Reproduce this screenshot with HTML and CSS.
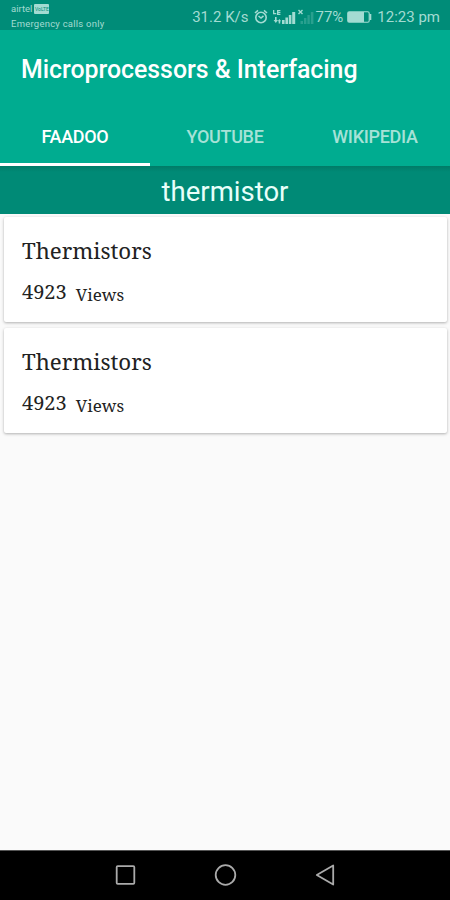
FILE: index.html
```html
<!DOCTYPE html>
<html lang="en">
<head>
  <meta charset="UTF-8" />
  <meta name="viewport" content="width=device-width, initial-scale=1.0"/>
  <title>Microprocessors &amp; Interfacing</title>
  <link rel="stylesheet" href="styles.css">
</head>
<body>

  <div class="status">
    <div class="carrier">
      <div class="network">airtel <span class="volte">VoLTE</span></div>
      <div class="emergency">Emergency calls only</div>
    </div>
    <div class="indicators">
      <span>31.2 K/s</span>
      <svg class="alarm" width="14" height="16" viewBox="0 0 14 16" fill="none" stroke="currentColor" stroke-width="1.6">
        <circle cx="7" cy="8.5" r="5.2"/>
        <path d="M1 4l3-2.6M13 4l-3-2.6M4.5 7l2.5 2 2.5-2.2"/>
      </svg>
      <svg class="signal" width="43" height="18" viewBox="0 0 43 18" fill="currentColor">
        <path d="M1 2h1.3v3h2v1.2H1zM5 2h3.4v1.2H6.4v.7h2v1.2h-2v.7h2V7H5zM3 9h1.6v3H6l-2.2 3-2.2-3H3zM6.7 15.5v-2.3h-1L7.4 11l1.8 2.2h-1v2.3z"/>
        <path d="M10 12h2.6v4H10zM13.4 9.5H16V16h-2.6zM16.8 7h2.6v9h-2.6zM20.2 4h3v12h-3z"/>
        <path d="M26.5 2l4 4m0-4l-4 4" fill="none" stroke="currentColor" stroke-width="1.4"/>
        <path opacity=".25" d="M28.5 13H31v3h-2.5zM32 10h2.4v6H32zM35.4 7h2.4v9h-2.4zM38.8 4h2.6v12h-2.6z"/>
      </svg>
      <span>77%</span>
      <svg class="battery" width="25" height="12" viewBox="0 0 25 12">
        <rect x=".7" y=".7" width="21.5" height="10.6" rx="1.5" fill="none" stroke="currentColor" stroke-width="1.1"/>
        <path d="M1 1h16v10H1zM22.5 3h1.8v6h-1.8z" fill="currentColor"/>
      </svg>
      <span>12:23 pm</span>
    </div>
  </div>

  <header>
    <h1>Microprocessors &amp; Interfacing</h1>
    <nav class="tabs">
      <a class="tab active">FAADOO</a>
      <a class="tab">YOUTUBE</a>
      <a class="tab">WIKIPEDIA</a>
    </nav>
  </header>

  <div class="topic">thermistor</div>

  <main>
    <div class="card">
      <h2>Thermistors</h2>
      <p><span class="count">4923</span><span class="views">Views</span></p>
    </div>
    <div class="card">
      <h2>Thermistors</h2>
      <p><span class="count">4923</span><span class="views">Views</span></p>
    </div>
  </main>

  <footer>
    <svg width="24" height="24" viewBox="0 0 24 24"><rect x="3.7" y="3.2" width="17.6" height="17.6" rx="1"/></svg>
    <svg width="24" height="24" viewBox="0 0 24 24"><circle cx="12.5" cy="12" r="9.8"/></svg>
    <svg width="24" height="24" viewBox="0 0 24 24"><path d="M20.2 2.5v19L3.8 12z"/></svg>
  </footer>

</body>
</html>
```

FILE: styles.css
```css
* {
  margin: 0; padding: 0; box-sizing: border-box;
}

body {
  height: 900px;
  display: flex;
  flex-direction: column;
  overflow: hidden;
  background: #fafafa;
  font-family: Roboto, sans-serif;
}

.status {
  height: 30px;
  display: flex;
  justify-content: space-between;
  padding: 0 10px 0 11px;
  background: #008c78;
  color: #a3dbd2;
}

.carrier {
  padding-top: 3px;
  font-size: 9.5px;
  line-height: 12px;
  white-space: nowrap;
}

.network {
  display: flex;
  align-items: center;
  gap: 2px;
}

.volte {
  width: 15px;
  height: 10px;
  border-radius: 1px;
  background: #a3dbd2;
  color: #008c78;
  font-size: 5px;
  line-height: 10px;
  text-align: center;
}

.emergency {
  margin-top: 3px;
  letter-spacing: 0.23px;
}

.indicators {
  display: flex;
  align-items: center;
  height: 33px;
  font-size: 15px;
  white-space: nowrap;
}

.alarm {
  margin-left: 6px;
}

.signal {
  margin-left: 4px;
}

.battery {
  margin: 0 5px 0 4px;
}

header {
  height: 136px;
  background: #00ac90;
  color: #fff;
}

h1 {
  height: 78px;
  padding-left: 21px;
  font-size: 24.9px;
  font-weight: 500;
  line-height: 79px;
  letter-spacing: -0.03px;
  white-space: nowrap;
}

.tabs {
  display: flex;
  height: 58px;
}

.tab {
  flex: 1;
  padding-top: 1px;
  border-bottom: 3px solid transparent;
  color: #a6e2d7;
  font-size: 18px;
  font-weight: 500;
  line-height: 55px;
  letter-spacing: -0.3px;
  text-align: center;
}

.tab.active {
  color: #fff;
  border-color: #fff;
}

.topic {
  height: 48px;
  background: linear-gradient(#007b67, #008a76 6px);
  color: #e8fffa;
  font-size: 27.5px;
  line-height: 51px;
  text-align: center;
}

main {
  flex: 1;
  padding: 3px 3px 0 4px;
}

.card {
  height: 105px;
  margin-bottom: 6px;
  padding: 18px 18px 0;
  border-radius: 2px;
  background: #fff;
  box-shadow: 0 1px 3px rgba(0,0,0,0.3);
  color: #222;
  font-family: "Noto Serif", "DejaVu Serif Condensed", "DejaVu Serif", serif;
}

.card h2 {
  font-size: 22.3px;
  font-weight: normal;
  line-height: 32px;
}

.card p {
  display: flex;
  gap: 9px;
  margin-top: 9px;
}

.count {
  font-size: 20px;
  line-height: 32px;
}

.views {
  padding-top: 3px;
  font-size: 17px;
  line-height: 32px;
}

footer {
  height: 50px;
  display: flex;
  align-items: center;
  justify-content: center;
  gap: 76px;
  padding-bottom: 1px;
  background: #000;
  border-top: 1px solid #555;
}

footer svg {
  fill: none;
  stroke: #aaa;
  stroke-width: 1.8;
  stroke-linejoin: round;
}
```
